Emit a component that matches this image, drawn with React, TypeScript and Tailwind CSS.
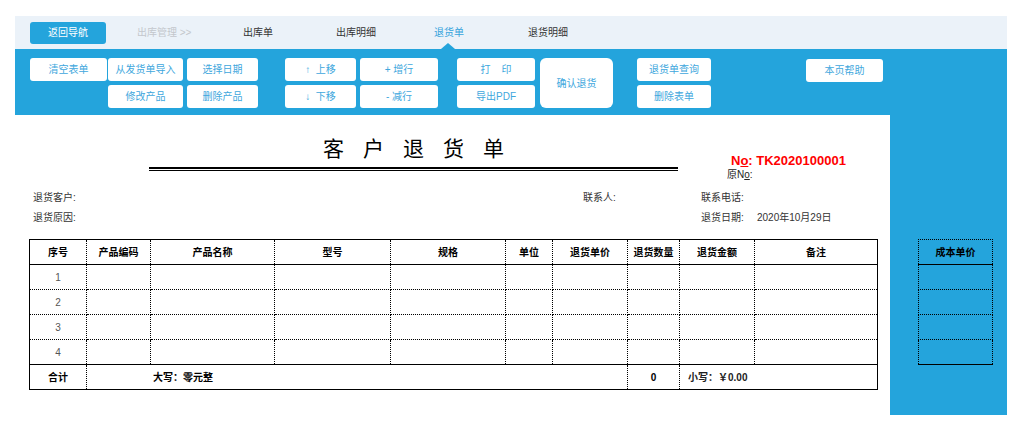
import React from "react";

const navItems = [
  { label: "出库管理 >>", w: "w-[106px]", tone: "text-[#c3c7cc]" },
  { label: "出库单", w: "w-[93px]", tone: "text-[#333]" },
  { label: "出库明细", w: "w-[98px]", tone: "text-[#333]" },
  { label: "退货单", w: "w-[94px]", tone: "text-[#35a3dc]", active: true },
  { label: "退货明细", w: "w-[80px]", tone: "text-[#333]" },
];

const cols = [
  { label: "序号", w: "w-[57px]" },
  { label: "产品编码", w: "w-[64px]" },
  { label: "产品名称", w: "w-[124px]" },
  { label: "型号", w: "w-[116px]" },
  { label: "规格", w: "w-[115px]" },
  { label: "单位", w: "w-[47px]" },
  { label: "退货单价", w: "w-[75px]" },
  { label: "退货数量", w: "w-[52px]" },
  { label: "退货金额", w: "w-[75px]" },
  { label: "备注", w: "w-[123px]" },
];

function Btn({ children, className = "" }: { children: React.ReactNode; className?: string }) {
  return (
    <button className={`w-full h-[23px] bg-white rounded-[3px] text-[10px] text-[#3ea7dd] flex items-center justify-center ${className}`}>
      {children}
    </button>
  );
}

export default function App() {
  return (
    <div className="w-[1023px] h-[430px] bg-white pt-4 pl-[15px] font-['Liberation_Sans','Noto_Sans_CJK_SC',sans-serif] text-[10px] text-[#333]">
      {/* Nav */}
      <div className="w-[992px] h-[33px] bg-[#ebf2f9] flex items-center">
        <button className="ml-[15px] w-[76px] h-[22px] rounded-[3px] bg-[#24a4dc] text-white text-[10px]">返回导航</button>
        <div className="ml-[31px] flex items-center h-full">
          {navItems.map((n) => (
            <div key={n.label} className={`relative h-full flex items-center ${n.w}`}>
              <span className={n.tone}>{n.label}</span>
              {n.active && (
                <span className="absolute bottom-0 left-[7px] w-0 h-0 border-l-[7px] border-r-[7px] border-b-[6px] border-l-transparent border-r-transparent border-b-[#24a4dc]" />
              )}
            </div>
          ))}
        </div>
      </div>

      <div className="flex">
        {/* Left: toolbar + document */}
        <div className="w-[875px]">
          <div className="h-[66px] bg-[#24a4dc] pt-[9px] flex items-start">
            <div className="ml-[15px] w-[77px] flex flex-col gap-[4px]">
              <Btn>清空表单</Btn>
            </div>
            <div className="ml-[1px] w-[75px] flex flex-col gap-[4px]">
              <Btn>从发货单导入</Btn>
              <Btn>修改产品</Btn>
            </div>
            <div className="ml-[4px] w-[71px] flex flex-col gap-[4px]">
              <Btn>选择日期</Btn>
              <Btn>删除产品</Btn>
            </div>
            <div className="ml-[27px] w-[71px] flex flex-col gap-[4px]">
              <Btn>↑&nbsp;&nbsp;上移</Btn>
              <Btn>↓&nbsp;&nbsp;下移</Btn>
            </div>
            <div className="ml-[4px] w-[78px] flex flex-col gap-[4px]">
              <Btn>+ 增行</Btn>
              <Btn>- 减行</Btn>
            </div>
            <div className="ml-[19px] w-[78px] flex flex-col gap-[4px]">
              <Btn>打&nbsp;&nbsp;&nbsp;&nbsp;印</Btn>
              <Btn>导出PDF</Btn>
            </div>
            <div className="ml-[5px] w-[73px]">
              <Btn className="h-[50px] rounded-[6px]">确认退货</Btn>
            </div>
            <div className="ml-[24px] w-[74px] flex flex-col gap-[4px]">
              <Btn>退货单查询</Btn>
              <Btn>删除表单</Btn>
            </div>
            <div className="ml-[95px] mt-[1px] w-[77px]">
              <Btn>本页帮助</Btn>
            </div>
          </div>

          {/* Document */}
          <div className="pt-[19px]">
            <div className="flex items-start">
              <div className="ml-[134px] w-[529px]">
                <div className="h-[30px] leading-[30px] text-center text-[21px] text-black tracking-[19px] pl-[19px]">
                  客户退货单
                </div>
                <div className="mt-[3px] h-[4px] border-t-2 border-b border-black" />
              </div>
              <div className="ml-[53px] mt-[19px] flex flex-col">
                <div className="h-[16px] leading-[16px] text-[13px] font-bold text-[#ff0000] whitespace-nowrap">
                  N<span className="underline">o</span>: TK2020100001
                </div>
                <div className="-ml-[4px] h-[12px] leading-[12px] text-[10px] text-[#222]">
                  原N<span className="underline">o</span>:
                </div>
              </div>
            </div>

            <div className="mt-[6px] flex h-[20px] items-center">
              <span className="ml-[18px] w-[550px]">退货客户:</span>
              <span className="w-[118px]">联系人:</span>
              <span>联系电话:</span>
            </div>
            <div className="flex h-[20px] items-center">
              <span className="ml-[18px] w-[668px]">退货原因:</span>
              <span className="w-[56px]">退货日期:</span>
              <span>2020年10月29日</span>
            </div>

            <table className="mt-[12px] ml-[14px] w-[848px] table-fixed border-collapse border border-solid border-black">
              <thead>
                <tr className="h-[25px]">
                  {cols.map((c) => (
                    <th
                      key={c.label}
                      className={`${c.w} p-0 font-bold text-black text-[10px] border-l border-r border-dotted border-black border-b`}
                      style={{ borderBottomStyle: "solid" }}
                    >
                      {c.label}
                    </th>
                  ))}
                </tr>
              </thead>
              <tbody>
                {[1, 2, 3, 4].map((r) => (
                  <tr key={r} className="h-[25px]">
                    {cols.map((c, i) => (
                      <td
                        key={c.label}
                        className="p-0 border border-dotted border-black text-center text-[#555]"
                        style={r === 4 ? { borderBottomStyle: "solid" } : undefined}
                      >
                        {i === 0 ? r : ""}
                      </td>
                    ))}
                  </tr>
                ))}
                <tr className="h-[25px] font-bold text-black">
                  <td className="p-0 text-center border-r border-dotted border-black">合计</td>
                  <td colSpan={6} className="p-0 pl-[66px] border-r border-dotted border-black">大写：零元整</td>
                  <td className="p-0 text-center border-r border-dotted border-black">0</td>
                  <td colSpan={2} className="p-0 pl-[8px] text-[#222]">小写：￥0.00</td>
                </tr>
              </tbody>
            </table>
          </div>
        </div>

        {/* Right blue panel */}
        <div className="w-[117px] h-[366px] bg-[#24a4dc] pt-[190px] pl-[28px]">
          <table className="w-[75px] table-fixed border-collapse">
            <thead>
              <tr className="h-[25px]">
                <th className="p-0 font-bold text-black text-[10px] border border-dotted border-black" style={{ borderBottomStyle: "solid" }}>
                  成本单价
                </th>
              </tr>
            </thead>
            <tbody>
              {[1, 2, 3, 4].map((r) => (
                <tr key={r} className="h-[25px]">
                  <td
                    className="p-0 border border-dotted border-black"
                    style={r === 4 ? { borderBottomStyle: "solid" } : undefined}
                  />
                </tr>
              ))}
            </tbody>
          </table>
        </div>
      </div>
    </div>
  );
}
